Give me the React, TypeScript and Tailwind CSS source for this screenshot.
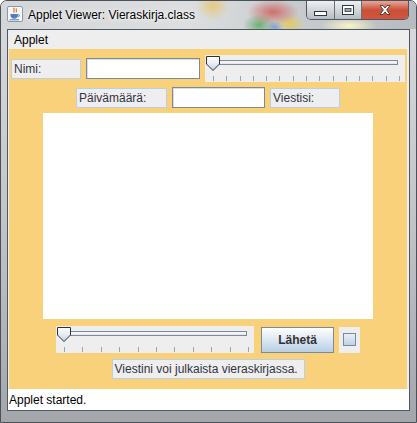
import React from 'react';

const font = "font-['Liberation_Sans',Arial,sans-serif]";

function JavaIcon() {
  return (
    <svg width="16" height="16" viewBox="0 0 16 16">
      <rect x="0.5" y="0.5" width="15" height="15" rx="1.5" fill="#f6f7f9" stroke="#8d98a5" />
      <path d="M7.2 2.2c-1.6 1.4 1.1 2-.4 4M9.4 3c-1 1 .9 1.5-.2 3" stroke="#e2782e" strokeWidth="1.2" fill="none" strokeLinecap="round" />
      <path d="M3.5 8h7.4v1.6c0 2-1.6 3.1-3.7 3.1S3.5 11.6 3.5 9.6z" fill="#4f7fbd" />
      <path d="M10.9 8.8h.9c.9 0 .9 1.8-.4 2" stroke="#4f7fbd" fill="none" strokeWidth="1" />
      <path d="M2.5 13.8h9.5" stroke="#4f7fbd" strokeWidth="1" />
    </svg>
  );
}

function Slider({ width, ticks }: { width: number; ticks: number }) {
  const first = 8;
  const last = width - 6;
  const step = (last - first) / (ticks - 1);
  return (
    <div className="bg-[#eeeeee]" style={{ width }}>
      <svg width={width} height="27" className="block">
        <defs>
          <linearGradient id="thumb" x1="0" y1="0" x2="0" y2="1">
            <stop offset="0" stopColor="#ffffff" />
            <stop offset="0.55" stopColor="#e3ebf4" />
            <stop offset="1" stopColor="#b8cfe5" />
          </linearGradient>
        </defs>
        <rect x="8.5" y="5.5" width={width - 16} height="4" fill="#e4e8ec" stroke="#7a8a99" />
        <line x1="9" y1="7" x2={width - 8} y2="7" stroke="#ffffff" />
        {Array.from({ length: ticks }).map((_, i) => {
          const x = Math.round(first + i * step) + 0.5;
          return <line key={i} x1={x} y1="21" x2={x} y2="26" stroke="#8fa6bf" />;
        })}
        <path d="M1.5 1.5h13v7.5l-6.5 6.5l-6.5-6.5z" fill="url(#thumb)" stroke="#333333" />
      </svg>
    </div>
  );
}

function Label({ text, w }: { text: string; w: string }) {
  return (
    <div className={`${w} h-[20px] border border-[#b8cfe5] bg-[#eeeeee] pl-[2px] text-[12px] leading-[18px] text-[#333344] whitespace-nowrap`}>
      {text}
    </div>
  );
}

function Field({ w }: { w: string }) {
  return <div className={`${w} h-[21px] border border-[#7a8a99] bg-white shadow-[inset_1px_1px_0_#d9dee4]`} />;
}

export default function App() {
  return (
    <div className={`${font} w-[417px] h-[423px] overflow-hidden rounded-t-[7px] border border-[#4b5158] bg-gradient-to-b from-[#d9dbdd] via-[#c3c6c9] to-[#a3a7ac] flex flex-col`}>
      {/* title bar */}
      <div className="h-[28px] flex items-start bg-[radial-gradient(circle_at_212px_4px,rgba(240,190,70,0.6),transparent_16px),radial-gradient(ellipse_26px_13px_at_272px_11px,rgba(205,70,60,0.7),transparent),radial-gradient(ellipse_16px_11px_at_258px_24px,rgba(70,160,80,0.7),transparent),radial-gradient(ellipse_14px_10px_at_289px_23px,rgba(235,200,60,0.75),transparent),radial-gradient(ellipse_9px_6px_at_274px_26px,rgba(80,130,210,0.6),transparent),radial-gradient(ellipse_28px_9px_at_348px_25px,rgba(255,250,200,0.9),transparent),linear-gradient(to_right,#d4d6d8,#dcdedf_45%,#c9cccf_70%,#b7bbbf)]">
        <div className="ml-[6px] mt-[5px]">
          <JavaIcon />
        </div>
        <div className="ml-[5px] mt-[6px] text-[12px] leading-[16px] text-black [text-shadow:0_0_6px_#ffffff,0_0_3px_#ffffff]">
          Applet Viewer: Vieraskirja.class
        </div>
        <div className="ml-auto mr-[7px] flex h-[19px] overflow-hidden rounded-b-[5px] border border-t-0 border-[#51575e]">
          <div className="w-[28px] flex items-center justify-center border-r border-[#6a7078] bg-gradient-to-b from-[#eef0f2] via-[#d3d7db] to-[#b7bdc4]">
            <svg width="13" height="5" className="mt-[6px]"><rect x="0.5" y="0.5" width="12" height="4" fill="#ffffff" stroke="#2f3945" /></svg>
          </div>
          <div className="w-[27px] flex items-center justify-center border-r border-[#6a7078] bg-gradient-to-b from-[#eef0f2] via-[#d3d7db] to-[#b7bdc4]">
            <svg width="12" height="10"><rect x="0.5" y="0.5" width="11" height="9" fill="#ffffff" stroke="#2f3945" /><rect x="3" y="3.5" width="6" height="3" fill="#9aa4b0" stroke="#2f3945" strokeWidth="0.8" /></svg>
          </div>
          <div className="w-[46px] flex items-center justify-center bg-gradient-to-b from-[#e9a698] via-[#c8503a] to-[#d4553c]">
            <svg width="12" height="10" viewBox="0 0 12 10"><path d="M1 0.5h3l2 2.6 2-2.6h3l-3.4 4.5 3.4 4.5h-3l-2-2.6-2 2.6h-3l3.4-4.5z" fill="#ffffff" stroke="#3a2a28" strokeWidth="0.8" /></svg>
          </div>
        </div>
      </div>

      {/* client area */}
      <div className="mx-[6px] h-[382px] border border-[#4e5863] bg-[#eeeeee] flex flex-col">
        <div className="h-[19px] bg-[#eeeeee] pl-[6px] pt-[1px] text-[12px] leading-[19px] text-black">Applet</div>
        <div className="ml-[1px] mr-[2px] h-[340px] bg-[#f8d17a] flex flex-col items-center">
          <div className="mt-[6px] flex items-center gap-[5px]">
            <Label text="Nimi:" w="w-[70px]" />
            <Field w="w-[114px]" />
            <Slider width={200} ticks={15} />
          </div>
          <div className="mt-[5px] flex items-center gap-[5px]">
            <Label text="Päivämäärä:" w="w-[91px]" />
            <Field w="w-[93px]" />
            <Label text="Viestisi:" w="w-[70px]" />
          </div>
          <div className="mt-[5px] w-[330px] h-[206px] bg-white" />
          <div className="mt-[7px] flex items-center">
            <Slider width={198} ticks={11} />
            <div className="ml-[7px] w-[73px] h-[26px] border border-[#7a8a99] bg-gradient-to-b from-white to-[#b8cfe5] flex items-center justify-center text-[12px] font-bold text-[#333333]">
              Lähetä
            </div>
            <div className="ml-[5px] w-[21px] h-[26px] bg-[#eeeeee] flex items-center justify-center">
              <div className="w-[13px] h-[13px] border border-[#7a8a99] bg-gradient-to-b from-[#e9eff6] to-[#bfd2e6]" />
            </div>
          </div>
          <div className="mt-[6px]">
            <Label text="Viestini voi julkaista vieraskirjassa." w="w-[193px]" />
          </div>
        </div>
        <div className="h-[21px] bg-white pl-[1px] pt-[2px] text-[12px] leading-[19px] text-black">Applet started.</div>
      </div>
    </div>
  );
}
